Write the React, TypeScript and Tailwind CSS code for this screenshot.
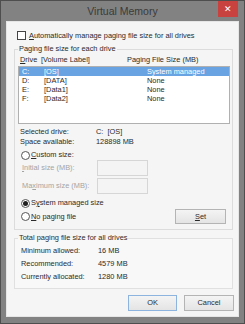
import React from "react";

const drives = [
  { d: "C:", label: "[OS]", size: "System managed", selected: true },
  { d: "D:", label: "[DATA]", size: "None" },
  { d: "E:", label: "[Data1]", size: "None" },
  { d: "F:", label: "[Data2]", size: "None" },
];

function Radio({ checked }: { checked?: boolean }) {
  return (
    <span className="w-[9px] h-[9px] rounded-full border border-[#555] bg-white flex items-center justify-center shrink-0">
      {checked && <span className="w-[5px] h-[5px] rounded-full bg-[#1e1e1e]" />}
    </span>
  );
}

function Button({ children, def }: { children: React.ReactNode; def?: boolean }) {
  return (
    <div
      className={`h-full flex items-center justify-center border bg-gradient-to-b from-[#f4f4f4] to-[#e4e4e4] ${
        def ? "border-[#8db4df]" : "border-[#b4b4b4]"
      }`}
    >
      {children}
    </div>
  );
}

export default function App() {
  return (
    <div className="w-[245px] h-[324px] bg-[#828282] border border-[#4e4e4e] flex flex-col font-['Liberation_Sans',Arial,sans-serif] text-[7.4px] leading-[10px] text-[#2a2a2a]">
      {/* Title bar */}
      <div className="relative h-[20px] shrink-0 flex items-center justify-center text-[10.5px] text-[#3a3a3a]">
        Virtual Memory
        <div className="absolute right-[6px] top-0 w-[20px] h-[16px] bg-[#c8423f] flex items-center justify-center text-white text-[9px] leading-none">
          ✕
        </div>
      </div>

      {/* Client area */}
      <div className="flex-1 mx-[5px] mb-[6px] bg-[#f5f5f5] border border-[#e6e6e6] flex flex-col">
        {/* Auto manage */}
        <div className="mt-[9px] ml-[10px] h-[9px] flex items-center gap-[3px]">
          <span className="w-[9px] h-[9px] border border-[#444] bg-white shrink-0" />
          <span>
            <span className="underline">A</span>utomatically manage paging file size for all drives
          </span>
        </div>

        {/* Paging file size for each drive */}
        <fieldset className="mt-[4px] ml-[7px] w-[219px] min-w-0 border border-[#dcdcdc] px-[2px] pb-[5px]">
          <legend className="ml-[1px] px-[1px] h-[10px]">Paging file size for each drive</legend>

          <div className="mt-[1px] h-[10px] flex pl-[3px]">
            <span className="w-[21px]">
              <span className="underline">D</span>rive
            </span>
            <span className="w-[86px]">[Volume Label]</span>
            <span>Paging File Size (MB)</span>
          </div>

          <div className="mt-[1px] ml-[1px] w-[212px] h-[58px] border border-[#b0b0b0] bg-white">
            {drives.map((r) => (
              <div
                key={r.d}
                className={`h-[9px] leading-[9px] flex pl-[3px] ${
                  r.selected ? "bg-[#6aa3e2] text-white" : ""
                }`}
              >
                <span className="w-[22px]">{r.d}</span>
                <span className="w-[103px]">{r.label}</span>
                <span>{r.size}</span>
              </div>
            ))}
          </div>

          <div className="mt-[3px] h-[10px] flex pl-[3px]">
            <span className="w-[76px]">Selected drive:</span>
            <span>C:&nbsp;&nbsp;[OS]</span>
          </div>
          <div className="h-[10px] flex pl-[3px]">
            <span className="w-[76px]">Space available:</span>
            <span>128898 MB</span>
          </div>

          <div className="mt-[3px] h-[10px] flex items-center gap-[1px] pl-[4px]">
            <Radio />
            <span>
              <span className="underline">C</span>ustom size:
            </span>
          </div>
          <div className="h-[16px] flex items-center pl-[5px] text-[#a4a4a4]">
            <span className="w-[75px]">
              <span className="underline">I</span>nitial size (MB):
            </span>
            <span className="w-[51px] h-[16px] border border-[#d6d6d6] bg-[#f4f4f4]" />
          </div>
          <div className="mt-[2px] h-[16px] flex items-center pl-[5px] text-[#a4a4a4]">
            <span className="w-[75px]">
              Ma<span className="underline">x</span>imum size (MB):
            </span>
            <span className="w-[51px] h-[16px] border border-[#d6d6d6] bg-[#f4f4f4]" />
          </div>

          <div className="mt-[4px] h-[10px] flex items-center gap-[1px] pl-[4px]">
            <Radio checked />
            <span>
              S<span className="underline">y</span>stem managed size
            </span>
          </div>
          <div className="mt-[1px] h-[15px] flex items-center justify-between pl-[4px] pr-[4px]">
            <div className="flex items-center gap-[1px]">
              <Radio />
              <span>
                <span className="underline">N</span>o paging file
              </span>
            </div>
            <div className="w-[51px] h-[15px]">
              <Button>
                <span className="underline">S</span>et
              </Button>
            </div>
          </div>
        </fieldset>

        {/* Totals */}
        <fieldset className="mt-[3px] ml-[7px] w-[219px] min-w-0 border border-[#e0e0e0] bg-[#f8f8f8] px-[2px] pb-[5px]">
          <legend className="ml-[1px] px-[1px] h-[10px]">Total paging file size for all drives</legend>
          <div className="mt-[1px] pl-[4px] leading-[13px]">
            <div className="flex">
              <span className="w-[77px]">Minimum allowed:</span>
              <span>16 MB</span>
            </div>
            <div className="flex">
              <span className="w-[77px]">Recommended:</span>
              <span>4579 MB</span>
            </div>
            <div className="flex">
              <span className="w-[77px]">Currently allocated:</span>
              <span>1280 MB</span>
            </div>
          </div>
        </fieldset>

        <div className="mt-[6px] h-[16px] flex justify-end gap-[7px] pr-[4px]">
          <div className="w-[49px]">
            <Button def>OK</Button>
          </div>
          <div className="w-[50px]">
            <Button>Cancel</Button>
          </div>
        </div>
      </div>
    </div>
  );
}
